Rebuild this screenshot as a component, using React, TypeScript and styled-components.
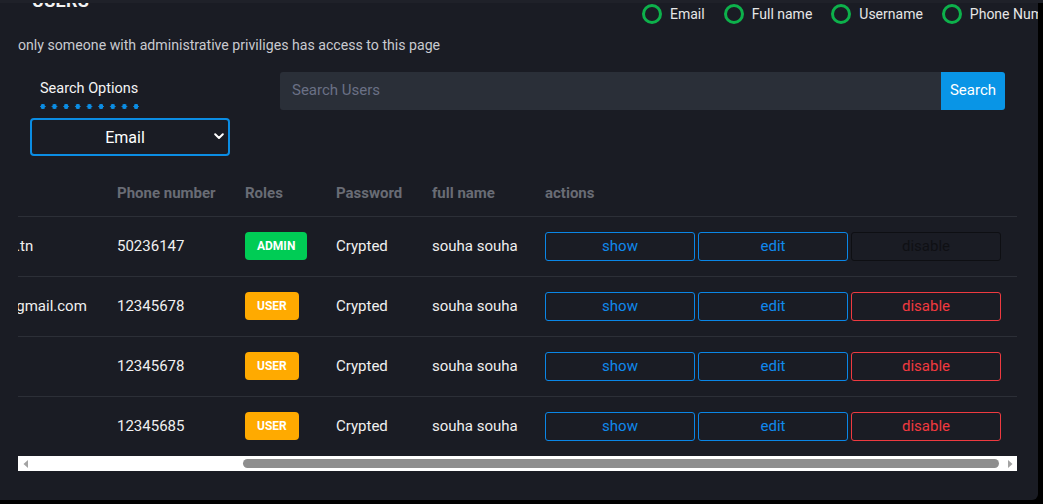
import React from "react";
import styled, { createGlobalStyle } from "styled-components";

const GlobalStyle = createGlobalStyle`
  html, body { margin: 0; padding: 0; background: #000; }
  body { font-family: Roboto, "Noto Sans", Arial, sans-serif; }
  * { box-sizing: border-box; }
`;

const Page = styled.div`
  width: 1043px;
  height: 504px;
  background: #000;
  overflow: hidden;
`;

const TopBand = styled.div`
  height: 3px;
  width: 1043px;
  background: #1f2129;
`;

const Card = styled.div`
  width: 1038px;
  height: 497px;
  background: #1a1c24;
  border-bottom-right-radius: 6px;
  overflow: hidden;
`;

const HeaderRow = styled.div`
  display: grid;
  grid-template-columns: 642px auto;
  align-items: start;
  padding-top: 1px;
  height: 21px;
`;

const Title = styled.h2`
  margin: -13px 0 0 32px;
  font-size: 18px;
  line-height: 19px;
  font-weight: 700;
  color: #f2f2f2;
  letter-spacing: 0.3px;
`;

const RadioGroup = styled.div`
  display: flex;
  align-items: center;
  gap: 19px;
  white-space: nowrap;
`;

const RadioItem = styled.label`
  display: flex;
  align-items: center;
  gap: 8px;
  font-size: 14px;
  color: #e6e6e6;
`;

const RadioCircle = styled.span`
  width: 20px;
  height: 20px;
  border: 3px solid #0db14b;
  border-radius: 50%;
  flex-shrink: 0;
`;

const Subtitle = styled.p`
  margin: 11px 0 0 18px;
  font-size: 14.15px;
  line-height: 20px;
  color: #c9cad0;
`;

const SearchSection = styled.div`
  display: flex;
  align-items: flex-start;
  gap: 50px;
  margin-top: 17px;
  padding-left: 30px;
`;

const OptionsColumn = styled.div`
  width: 200px;
  display: flex;
  flex-direction: column;
`;

const OptionsLabel = styled.div`
  margin: 7px 0 0 10px;
  font-size: 14.5px;
  line-height: 20px;
  color: #f4f4f4;
`;

const Dots = styled.div`
  margin: 5px 0 0 10px;
  width: 99px;
  height: 5px;
  background-image: radial-gradient(circle, #0b8de4 2.4px, transparent 2.6px);
  background-size: 11.66px 5px;
  background-position: -3px 0;
  background-repeat: repeat-x;
`;

const SelectWrap = styled.div`
  position: relative;
  margin-top: 9px;
  width: 200px;
  height: 38px;
`;

const Select = styled.select`
  appearance: none;
  -webkit-appearance: none;
  width: 100%;
  height: 100%;
  background: #1a1c24;
  border: 2px solid #0b8de4;
  border-radius: 4px;
  padding: 0 10px 0 0;
  color: #fff;
  font-family: Roboto, sans-serif;
  font-size: 16px;
  text-align: center;
  text-align-last: center;
  outline: none;
`;

const Chevron = styled.svg`
  position: absolute;
  right: 6px;
  top: 15px;
  pointer-events: none;
`;

const SearchBar = styled.div`
  display: flex;
  width: 725px;
  height: 38px;
`;

const SearchInput = styled.input`
  flex: 1;
  height: 100%;
  background: #2a2f38;
  border: none;
  border-radius: 3px 0 0 3px;
  padding: 0 12px 2px;
  font-family: Roboto, sans-serif;
  font-size: 15px;
  color: #ddd;
  outline: none;
  &::placeholder { color: #6b7186; }
`;

const SearchButton = styled.button`
  width: 64px;
  height: 100%;
  border: none;
  border-radius: 0 3px 3px 0;
  background: #0995e6;
  color: #fff;
  font-family: Roboto, sans-serif;
  font-size: 15px;
  padding: 0 0 2px;
`;

const TableViewport = styled.div`
  margin: 14px 0 0 18px;
  width: 999px;
  overflow: hidden;
`;

const Table = styled.table<{ $offset: number }>`
  margin-left: -${(p) => p.$offset}px;
  width: 1275px;
  table-layout: fixed;
  border-collapse: collapse;
  border-spacing: 0;
`;

const Th = styled.th`
  height: 46px;
  padding: 0 12px;
  text-align: left;
  font-size: 15px;
  font-weight: 700;
  color: #696c75;
  border-bottom: 1px solid #2c2f37;
  white-space: nowrap;
`;

const Tr = styled.tr`
  td { height: 60px; border-bottom: 1px solid #2c2f37; }
  &:last-child td { height: 60px; border-bottom: none; }
`;

const Td = styled.td<{ $right?: number }>`
  padding: 0 ${(p) => p.$right ?? 12}px 0 12px;
  font-size: 15px;
  color: #f0f0f0;
  white-space: nowrap;
  overflow: hidden;
`;

const Badge = styled.span<{ $bg: string }>`
  display: inline-flex;
  align-items: center;
  justify-content: center;
  height: 28px;
  padding: 0 12px;
  border-radius: 4px;
  background: ${(p) => p.$bg};
  color: #fff;
  font-size: 12px;
  font-weight: 700;
  vertical-align: middle;
`;

const Actions = styled.div`
  display: flex;
  gap: 3px;
`;

const ActionButton = styled.button<{ $tone: "blue" | "red" | "off" }>`
  width: 150px;
  height: 29px;
  padding: 0;
  background: transparent;
  border-radius: 3px;
  font-family: Roboto, sans-serif;
  font-size: 15px;
  border: 1px solid
    ${(p) => (p.$tone === "blue" ? "#0a86e6" : p.$tone === "red" ? "#ee3a40" : "#0e0f13")};
  color: ${(p) => (p.$tone === "blue" ? "#1089ec" : p.$tone === "red" ? "#f0393f" : "#0f1014")};
`;

const ScrollBar = styled.div`
  width: 999px;
  height: 15px;
  margin-left: 18px;
  background: #fff;
  display: flex;
  align-items: center;
`;

const ArrowBox = styled.div`
  width: 15px;
  height: 15px;
  display: flex;
  align-items: center;
  justify-content: center;
  flex-shrink: 0;
`;

const Track = styled.div`
  flex: 1;
  height: 9px;
  display: flex;
`;

const Thumb = styled.div<{ $start: number; $width: number }>`
  margin-left: ${(p) => p.$start}px;
  width: ${(p) => p.$width}px;
  height: 9px;
  border-radius: 5px;
  background: #8e8e8e;
`;

type User = {
  username: string;
  email: string;
  phone: string;
  role: "ADMIN" | "USER";
  fullName: string;
  disabled: boolean;
};

const users: User[] = [
  { username: "souha", email: "souha.souha@esprit.tn", phone: "50236147", role: "ADMIN", fullName: "souha souha", disabled: true },
  { username: "souha12", email: "souha.souha-1234@gmail.com", phone: "12345678", role: "USER", fullName: "souha souha", disabled: false },
  { username: "souha13", email: "user@test.tn", phone: "12345678", role: "USER", fullName: "souha souha", disabled: false },
  { username: "souha14", email: "test@test.tn", phone: "12345685", role: "USER", fullName: "souha souha", disabled: false },
];

const columns = [125, 238, 128, 91, 96, 113, 484];
const headers = ["Username", "Email", "Phone number", "Roles", "Password", "full name", "actions"];

export default function App() {
  return (
    <Page>
      <GlobalStyle />
      <TopBand />
      <Card>
        <HeaderRow>
          <Title>USERS</Title>
          <RadioGroup>
            {["Email", "Full name", "Username", "Phone Number"].map((l) => (
              <RadioItem key={l}>
                <RadioCircle />
                {l}
              </RadioItem>
            ))}
          </RadioGroup>
        </HeaderRow>
        <Subtitle>only someone with administrative priviliges has access to this page</Subtitle>
        <SearchSection>
          <OptionsColumn>
            <OptionsLabel>Search Options</OptionsLabel>
            <Dots />
            <SelectWrap>
              <Select defaultValue="email">
                <option value="email">Email</option>
                <option value="fullname">Full name</option>
                <option value="username">Username</option>
                <option value="phone">Phone Number</option>
              </Select>
              <Chevron width="10" height="7" viewBox="0 0 10 7">
                <path d="M1.2 1.3 L5 5 L8.8 1.3" fill="none" stroke="#fff" strokeWidth="2" strokeLinecap="round" strokeLinejoin="round" />
              </Chevron>
            </SelectWrap>
          </OptionsColumn>
          <SearchBar>
            <SearchInput placeholder="Search Users" />
            <SearchButton>Search</SearchButton>
          </SearchBar>
        </SearchSection>
        <TableViewport>
          <Table $offset={276}>
            <colgroup>
              {columns.map((w, i) => (
                <col key={i} style={{ width: w }} />
              ))}
            </colgroup>
            <thead>
              <tr>
                {headers.map((h) => (
                  <Th key={h}>{h}</Th>
                ))}
              </tr>
            </thead>
            <tbody>
              {users.map((u) => (
                <Tr key={u.username}>
                  <Td>{u.username}</Td>
                  <Td>{u.email}</Td>
                  <Td>{u.phone}</Td>
                  <Td>
                    <Badge $bg={u.role === "ADMIN" ? "#00cc55" : "#ffaa00"}>{u.role}</Badge>
                  </Td>
                  <Td>Crypted</Td>
                  <Td>{u.fullName}</Td>
                  <Td $right={15}>
                    <Actions>
                      <ActionButton $tone="blue">show</ActionButton>
                      <ActionButton $tone="blue">edit</ActionButton>
                      <ActionButton $tone={u.disabled ? "off" : "red"}>disable</ActionButton>
                    </Actions>
                  </Td>
                </Tr>
              ))}
            </tbody>
          </Table>
        </TableViewport>
        <ScrollBar>
          <ArrowBox>
            <svg width="6" height="8" viewBox="0 0 6 8">
              <path d="M5 0 L0.5 4 L5 8 Z" fill="#a3a3a3" />
            </svg>
          </ArrowBox>
          <Track>
            <Thumb $start={210} $width={756} />
          </Track>
          <ArrowBox>
            <svg width="6" height="8" viewBox="0 0 6 8">
              <path d="M1 0 L5.5 4 L1 8 Z" fill="#a3a3a3" />
            </svg>
          </ArrowBox>
        </ScrollBar>
      </Card>
    </Page>
  );
}
